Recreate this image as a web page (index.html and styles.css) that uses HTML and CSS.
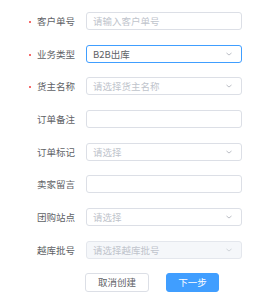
FILE: index.html
```html
<!DOCTYPE html>
<html lang="zh">
<head>
    <meta charset="utf-8">
    <title>创建订单</title>
    <link rel="stylesheet" href="styles.css">
</head>
<body>
<form class="order-form">
    <div class="form-item">
        <label class="form-label required">客户单号</label>
        <div class="form-input"><span class="placeholder">请输入客户单号</span></div>
    </div>
    <div class="form-item">
        <label class="form-label required">业务类型</label>
        <div class="form-input select focus"><span class="value">B2B出库</span><svg class="arrow" width="6" height="4" viewBox="0 0 6 4"><path d="M0.5 1 L3 3 L5.5 1" fill="none" stroke="#b4b8bf" stroke-width="0.9"/></svg></div>
    </div>
    <div class="form-item">
        <label class="form-label required">货主名称</label>
        <div class="form-input select"><span class="placeholder">请选择货主名称</span><svg class="arrow" width="6" height="4" viewBox="0 0 6 4"><path d="M0.5 1 L3 3 L5.5 1" fill="none" stroke="#b4b8bf" stroke-width="0.9"/></svg></div>
    </div>
    <div class="form-item">
        <label class="form-label">订单备注</label>
        <div class="form-input"></div>
    </div>
    <div class="form-item">
        <label class="form-label">订单标记</label>
        <div class="form-input select"><span class="placeholder">请选择</span><svg class="arrow" width="6" height="4" viewBox="0 0 6 4"><path d="M0.5 1 L3 3 L5.5 1" fill="none" stroke="#b4b8bf" stroke-width="0.9"/></svg></div>
    </div>
    <div class="form-item">
        <label class="form-label">卖家留言</label>
        <div class="form-input"></div>
    </div>
    <div class="form-item">
        <label class="form-label">团购站点</label>
        <div class="form-input select"><span class="placeholder">请选择</span><svg class="arrow" width="6" height="4" viewBox="0 0 6 4"><path d="M0.5 1 L3 3 L5.5 1" fill="none" stroke="#b4b8bf" stroke-width="0.9"/></svg></div>
    </div>
    <div class="form-item">
        <label class="form-label">越库批号</label>
        <div class="form-input select disabled"><span class="placeholder">请选择越库批号</span><svg class="arrow" width="6" height="4" viewBox="0 0 6 4"><path d="M0.5 1 L3 3 L5.5 1" fill="none" stroke="#ccd0d6" stroke-width="0.9"/></svg></div>
    </div>
    <div class="form-actions">
        <button type="button" class="btn">取消创建</button>
        <button type="button" class="btn btn-primary">下一步</button>
    </div>
</form>
</body>
</html>
```

FILE: styles.css
```css
html, body {
    background-color: #fff;
    margin: 0;
    font-family: "Noto Sans CJK SC", "Noto Sans", sans-serif;
    font-size: 9.5px;
    color: #606266;
}

.order-form {
    padding-top: 12px;
}

.form-item {
    display: grid;
    grid-template-columns: 75px 156px;
    column-gap: 11px;
    align-items: center;
    height: 18px;
    margin-bottom: 14.7px;
}

.form-label {
    text-align: right;
    color: #606266;
    line-height: 18px;
}

.required::before {
    content: "";
    display: inline-block;
    width: 2px;
    height: 2px;
    background-color: #f56c6c;
    vertical-align: middle;
    margin-right: 6px;
    margin-bottom: 1px;
}

.form-input {
    box-sizing: border-box;
    height: 18px;
    border: 1px solid #dcdfe6;
    border-radius: 3px;
    padding: 0 9px 0 6px;
    display: flex;
    align-items: center;
    justify-content: space-between;
    line-height: 16px;
}

.placeholder {
    color: #c0c4cc;
}

.value {
    color: #606266;
}

.focus {
    border-color: #409eff;
}

.disabled {
    background-color: #f5f7fa;
    border-color: #e4e7ed;
}

.arrow {
    display: block;
}

.form-actions {
    display: flex;
    gap: 17px;
    margin-left: 85px;
    margin-top: -0.7px;
}

.btn {
    box-sizing: border-box;
    height: 19px;
    width: 64px;
    padding: 0;
    border: 1px solid #dcdfe6;
    border-radius: 3px;
    background-color: #fff;
    color: #606266;
    font-family: inherit;
    font-size: 9.5px;
}

.btn-primary {
    width: 53px;
    background-color: #409eff;
    border-color: #409eff;
    color: #fff;
}
```
